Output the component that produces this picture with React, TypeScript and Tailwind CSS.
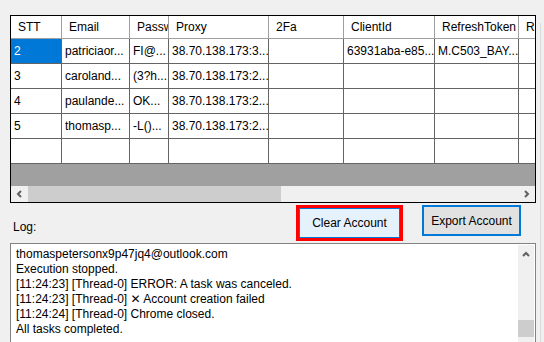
import React from 'react';

const cols = [51, 68, 39, 100, 75, 91, 84, 60];
const headers = ['STT', 'Email', 'Passw', 'Proxy', '2Fa', 'ClientId', 'RefreshToken', 'R'];

const rows: string[][] = [
  ['2', 'patriciaor...', 'FI@...', '38.70.138.173:3...', '', '63931aba-e85...', 'M.C503_BAY...', ''],
  ['3', 'caroland...', '(3?h...', '38.70.138.173:2...', '', '', '', ''],
  ['4', 'paulande...', 'OK...', '38.70.138.173:2...', '', '', '', ''],
  ['5', 'thomasp...', '-L()...', '38.70.138.173:2...', '', '', '', ''],
  ['', '', '', '', '', '', '', ''],
];

const logLines = [
  'thomaspetersonx9p47jq4@outlook.com',
  'Execution stopped.',
  '[11:24:23] [Thread-0] ERROR: A task was canceled.',
  '[11:24:23] [Thread-0] ✕ Account creation failed',
  '[11:24:24] [Thread-0] Chrome closed.',
  'All tasks completed.',
];

function Chevron({ dir }: { dir: 'left' | 'right' | 'up' }) {
  const d =
    dir === 'left' ? 'M5 1 L2 4 L5 7' : dir === 'right' ? 'M2 1 L5 4 L2 7' : 'M1 5 L4 2 L7 5';
  return (
    <svg width="8" height="8" viewBox="0 0 8 8">
      <path d={d} fill="none" stroke="#606060" strokeWidth="2" />
    </svg>
  );
}

export default function App() {
  return (
    <div
      className="w-[544px] h-[342px] bg-[#f0f0f0] overflow-hidden flex text-[12px] text-black"
      style={{ fontFamily: '"Liberation Sans", "DejaVu Sans", sans-serif' }}
    >
      <div className="w-[536px] pl-[10px] pt-[15px] flex flex-col shrink-0">
        {/* grid */}
        <div className="w-[526px] h-[188px] border border-black flex flex-col overflow-hidden bg-white">
          <div className="flex h-[23px] shrink-0 border-b border-[#a0a0a0] bg-white">
            {headers.map((h, i) => (
              <div
                key={i}
                style={{ width: cols[i] }}
                className="shrink-0 border-r border-[#a0a0a0] pl-[7px] leading-[22px] overflow-hidden whitespace-nowrap"
              >
                {h}
              </div>
            ))}
          </div>
          {rows.map((r, ri) => (
            <div key={ri} className="flex h-[25px] shrink-0 border-b border-[#646464]">
              {r.map((c, ci) => {
                const sel = ri === 0 && ci === 0;
                return (
                  <div
                    key={ci}
                    style={{ width: cols[ci] }}
                    className={
                      'shrink-0 border-r border-[#646464] pl-[3px] leading-[24px] overflow-hidden whitespace-nowrap ' +
                      (sel ? 'bg-[#0078d7] text-white' : '')
                    }
                  >
                    {c}
                  </div>
                );
              })}
            </div>
          ))}
          <div className="h-[22px] shrink-0 bg-[#a0a0a0]" />
          <div className="h-[16px] shrink-0 bg-[#f0f0f0] flex items-center">
            <div className="w-[17px] flex justify-center">
              <Chevron dir="left" />
            </div>
            <div className="w-[253px] h-[16px] bg-[#cdcdcd]" />
            <div className="flex-1" />
            <div className="w-[17px] flex justify-center">
              <Chevron dir="right" />
            </div>
          </div>
        </div>

        {/* controls */}
        <div className="flex h-[40px] shrink-0 items-start">
          <div className="w-[286px] pl-[3px] pt-[17px] leading-[15px]">Log:</div>
          <div className="mt-[2px] border-[3px] border-[#ff0000] w-[107px] h-[36px]">
            <div className="w-full h-full border border-[#0078d7] bg-[#e5f1fb] flex items-center justify-center">
              Clear Account
            </div>
          </div>
          <div className="ml-[19px] mt-[2px] w-[99px] h-[31px] border-2 border-[#0078d7] bg-[#e1e1e1] flex items-center justify-center">
            Export Account
          </div>
        </div>

        {/* log */}
        <div className="w-[526px] flex-1 border border-[#828282] border-b-0 bg-white flex">
          <div className="flex-1 pl-[5px] pt-[3px] leading-[15px] whitespace-nowrap overflow-hidden">
            {logLines.map((l, i) => (
              <div key={i}>{l}</div>
            ))}
          </div>
          <div className="w-[16px] mr-[1px] mt-[1px] bg-[#f0f0f0] flex flex-col items-center">
            <div className="h-[20px] flex items-center justify-center">
              <Chevron dir="up" />
            </div>
            <div className="mt-[55px] w-full h-[17px] bg-[#cdcdcd]" />
          </div>
        </div>
      </div>
      <div className="ml-[4px] mt-[23px] border-l border-[#dadada] flex-1" />
    </div>
  );
}
